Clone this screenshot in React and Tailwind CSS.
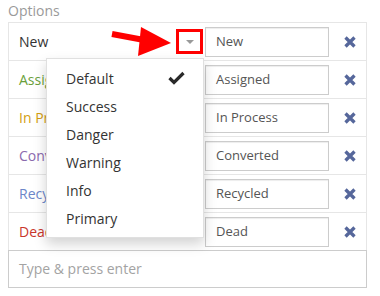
import React from "react";

const rows = [
  { label: "New", color: "text-[#333333]", value: "New" },
  { label: "Assigned", color: "text-[#6a9f3a]", value: "Assigned" },
  { label: "In Process", color: "text-[#d39e13]", value: "In Process" },
  { label: "Converted", color: "text-[#8b6aae]", value: "Converted" },
  { label: "Recycled", color: "text-[#6c86c9]", value: "Recycled" },
  { label: "Dead", color: "text-[#c9362c]", value: "Dead" },
];

const menu = ["Default", "Success", "Danger", "Warning", "Info", "Primary"];

function Cross() {
  return (
    <svg width="12" height="12" viewBox="0 0 12 12" className="block">
      <path d="M1.5 1.5 L10.5 10.5 M10.5 1.5 L1.5 10.5" stroke="#56679b" strokeWidth="3.3" />
    </svg>
  );
}

export default function App() {
  return (
    <div className="relative w-[380px] h-[296px] bg-white font-['Open_Sans',sans-serif] overflow-hidden">
      <div className="h-[22px] pl-2 text-[14px] leading-[21px] text-[#9a9a9a]">Options</div>

      <div className="ml-2 w-[359px] border border-b-0 border-[#e6e6e6]">
        {rows.map((r, i) => (
          <div
            key={r.label}
            className={`flex items-center ${i < rows.length - 1 ? "h-[38px] border-b border-[#e6e6e6]" : "h-[37px]"}`}
          >
            <div className={`w-[167px] pl-[10px] text-[14px] whitespace-nowrap ${r.color}`}>{r.label}</div>
            <div className={`w-[27px] h-[25px] flex items-center justify-center ${i === 0 ? "border-[3px] border-[#ff0000]" : ""}`}>
              {i === 0 && (
                <svg width="8" height="4" viewBox="0 0 8 4" className="block">
                  <path d="M0 0 L8 0 L4 4 Z" fill="#999" />
                </svg>
              )}
            </div>
            <div className="ml-[2px] w-[124px] h-[30px] border border-[#cccccc] shadow-[inset_0_1px_1px_rgba(0,0,0,0.075)] pl-[10px] flex items-center text-[13px] text-[#555555]">
              {r.value}
            </div>
            <div className="ml-[15px]">
              <Cross />
            </div>
          </div>
        ))}
      </div>

      <div className="ml-2 w-[359px] h-[38px] border border-[#cccccc] flex items-center pl-[10px] pb-[2px] text-[14px] text-[#a3a3a3]">
        Type &amp; press enter
      </div>

      <svg className="absolute left-[108px] top-[24px]" width="66" height="36" viewBox="0 0 66 36">
        <path d="M4 10 L36 16" stroke="#ff0000" strokeWidth="6" />
        <path d="M33 3 L63 19 L30 32 Z" fill="#ff0000" />
      </svg>

      <div className="absolute left-[46px] top-[58px] w-[158px] py-[5px] bg-white border border-[rgba(0,0,0,0.12)] shadow-[0_6px_12px_rgba(0,0,0,0.175)]">
        {menu.map((m, i) => (
          <div key={m} className="h-[28px] flex items-center pl-[19px] text-[14px] text-[#333333] relative">
            {m}
            {i === 0 && (
              <svg className="absolute left-[121px] top-[7px]" width="17" height="14" viewBox="0 0 17 14">
                <path d="M1.5 7 L6 11.5 L15.5 2" stroke="#2a2a2a" strokeWidth="3.2" fill="none" />
              </svg>
            )}
          </div>
        ))}
      </div>
    </div>
  );
}
